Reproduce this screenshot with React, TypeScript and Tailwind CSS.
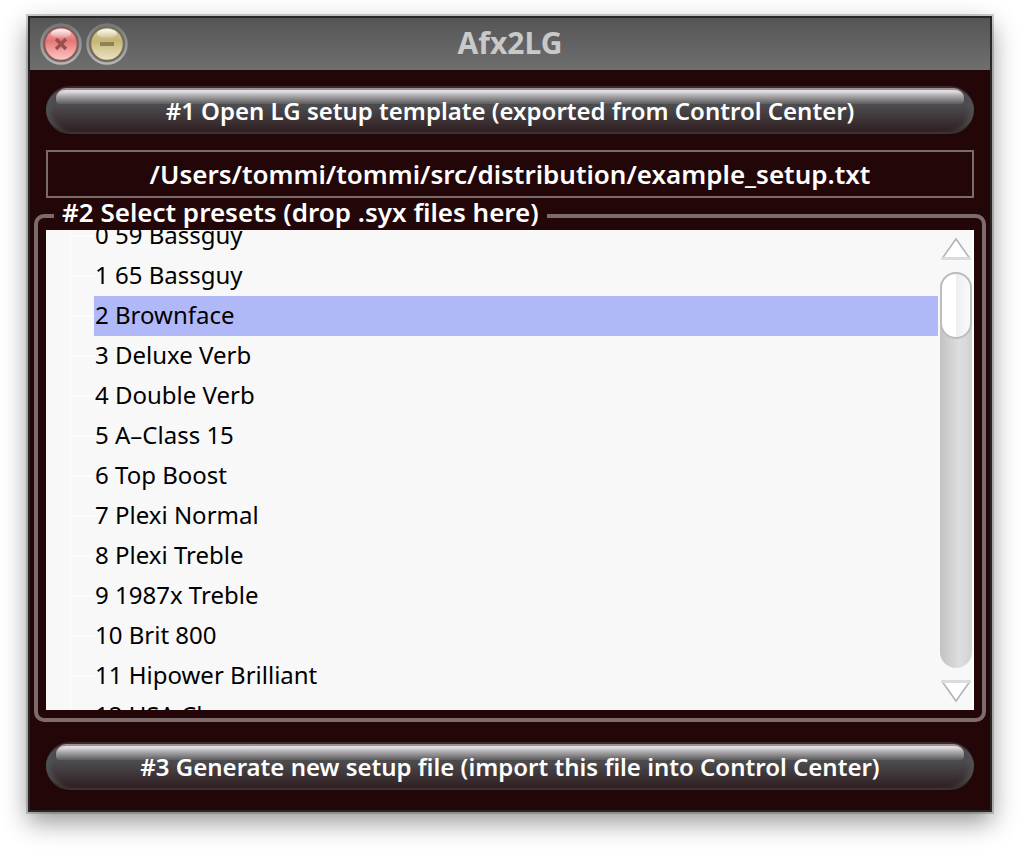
import { useState, type ReactNode } from "react";

const presets = [
  "59 Bassguy",
  "65 Bassguy",
  "Brownface",
  "Deluxe Verb",
  "Double Verb",
  "A–Class 15",
  "Top Boost",
  "Plexi Normal",
  "Plexi Treble",
  "1987x Treble",
  "Brit 800",
  "Hipower Brilliant",
  "USA Clean",
];

function GlossyButton({ children }: { children: ReactNode }) {
  return (
    <button
      type="button"
      className="relative h-12 w-full rounded-full border-y-2 border-t-[#352c2e] border-b-[#373435] bg-linear-to-b from-[#4a4648] via-[#4c4c4f] via-40% to-[#2e1c1f] bg-origin-border pt-0.5 text-center text-2xl leading-10 font-semibold text-white shadow-[inset_9px_0_6px_-5px_#505355,inset_-9px_0_6px_-5px_#505355]"
    >
      <span className="absolute inset-x-[10px] top-0 h-4 rounded-t-[10px] rounded-b-sm border-t-2 border-[#a19092] bg-linear-to-b from-[#e0dcdf] from-10% via-[#b0adb0] via-40% to-[#5c5b5d]" />
      <span className="relative">{children}</span>
    </button>
  );
}

function CloseIcon() {
  return (
    <svg viewBox="0 0 42 42" className="block size-full" aria-hidden="true">
      <defs>
        <linearGradient id="ring" x1="0" y1="0" x2="0" y2="1">
          <stop offset="0" stopColor="#777" />
          <stop offset="1" stopColor="#b5b5b5" />
        </linearGradient>
        <linearGradient id="red" x1="0" y1="0" x2="0" y2="1">
          <stop offset="0" stopColor="#f0b5b4" />
          <stop offset="0.4" stopColor="#e47572" />
          <stop offset="0.65" stopColor="#f09a98" />
          <stop offset="1" stopColor="#f8cbc9" />
        </linearGradient>
        <linearGradient id="shine" x1="0" y1="0" x2="0" y2="1">
          <stop offset="0" stopColor="#fff" stopOpacity="0.85" />
          <stop offset="1" stopColor="#fff" stopOpacity="0.1" />
        </linearGradient>
      </defs>
      <circle cx="21" cy="21" r="19.5" fill="#717171" stroke="url(#ring)" strokeWidth="2.5" />
      <circle cx="21" cy="21" r="16.5" fill="url(#red)" stroke="#8b5654" strokeWidth="1.5" />
      <ellipse cx="21" cy="10.5" rx="10" ry="4.5" fill="url(#shine)" />
      <path d="M16 16l10 10M26 16L16 26" stroke="#985150" strokeWidth="3.5" />
    </svg>
  );
}

function MinimizeIcon() {
  return (
    <svg viewBox="0 0 42 42" className="block size-full" aria-hidden="true">
      <defs>
        <linearGradient id="gold" x1="0" y1="0" x2="0" y2="1">
          <stop offset="0" stopColor="#d8cfad" />
          <stop offset="0.4" stopColor="#c5b475" />
          <stop offset="0.65" stopColor="#d8ca98" />
          <stop offset="1" stopColor="#ebe3c4" />
        </linearGradient>
      </defs>
      <circle cx="21" cy="21" r="19.5" fill="#717171" stroke="url(#ring)" strokeWidth="2.5" />
      <circle cx="21" cy="21" r="16.5" fill="url(#gold)" stroke="#756d4e" strokeWidth="1.5" />
      <ellipse cx="21" cy="10.5" rx="10" ry="4.5" fill="url(#shine)" />
      <path d="M14 21h14" stroke="#8f8356" strokeWidth="4" />
    </svg>
  );
}

function ScrollArrow({ direction }: { direction: "up" | "down" }) {
  return (
    <button
      type="button"
      aria-label={direction === "up" ? "Scroll up" : "Scroll down"}
      className={
        direction === "up"
          ? "flex h-[42px] w-8 items-center justify-center pb-1"
          : "flex h-[42px] w-8 items-center justify-center pt-1"
      }
    >
      <svg
        viewBox="0 0 32 24"
        className={direction === "up" ? "h-6 w-8" : "h-6 w-8 rotate-180"}
        aria-hidden="true"
      >
        <path d="M16 2L2.5 21H29.5Z" fill="#fff" stroke="#b4b4b4" strokeWidth="1.6" />
        <path d="M1.5 21.5H30.5" stroke="#dcdcdc" strokeWidth="3" />
      </svg>
    </button>
  );
}

export default function App() {
  const [selected, setSelected] = useState(2);

  return (
    <div className="min-h-screen bg-white px-7 pt-4 pb-10 font-['Noto_Sans','Open_Sans',sans-serif]">
      <div className="border-2 border-[#272727] bg-[#220608] shadow-[0_0_0_2px_rgba(0,0,0,0.18),0_10px_24px_rgba(0,0,0,0.42)]">
        <header className="grid h-[52px] grid-cols-[1fr_auto_1fr] items-center bg-linear-to-b from-[#555555] to-[#6f6f6f] px-2.5">
          <div className="flex gap-1">
            <button type="button" aria-label="Close" className="size-[42px]">
              <CloseIcon />
            </button>
            <button type="button" aria-label="Minimize" className="size-[42px]">
              <MinimizeIcon />
            </button>
          </div>
          <h1 className="pb-0.5 text-3xl leading-[50px] font-bold text-[#c9c9c9]">Afx2LG</h1>
        </header>

        <main className="pt-4 pb-5">
          <div className="px-4">
            <GlossyButton>#1 Open LG setup template (exported from Control Center)</GlossyButton>
            <input
              type="text"
              readOnly
              aria-label="Setup template file"
              value="/Users/tommi/tommi/src/distribution/example_setup.txt"
              className="mt-4 block h-12 w-full border-2 border-[#7b6a6a] bg-transparent text-center text-[26px] font-semibold text-white outline-none"
            />
          </div>

          <fieldset className="mx-1 mt-0.5 rounded-[10px] border-4 border-[#7d6b6c] px-2 pb-2">
            <legend className="ml-2 h-8 px-2 text-[26px] leading-6 font-semibold text-white">
              #2 Select presets (drop .syx files here)
            </legend>
            <div className="-mt-0.5 flex h-[480px] border-r-2 border-white bg-[#f8f8f8]">
              <div className="min-w-0 flex-1 overflow-hidden">
                <ul
                  role="listbox"
                  aria-label="Presets"
                  className="-mt-3.5 ml-6 border-l-2 border-[#fcfcfc]"
                >
                  {presets.map((name, index) => (
                    <li
                      key={name}
                      role="option"
                      aria-selected={index === selected}
                      onClick={() => setSelected(index)}
                      className="flex h-10 cursor-default items-center"
                    >
                      <span className="h-0.5 w-[22px] bg-[#fcfcfc]" />
                      <span
                        className={
                          index === selected
                            ? "flex-1 bg-[#b0b8f8] pb-0.5 pl-px text-2xl leading-[38px] whitespace-pre text-black"
                            : "flex-1 pb-0.5 pl-px text-2xl leading-[38px] whitespace-pre text-black"
                        }
                      >
                        {index} {name}
                      </span>
                    </li>
                  ))}
                </ul>
              </div>
              <div className="flex w-[34px] flex-col items-end">
                <ScrollArrow direction="up" />
                <div className="w-8 flex-1 rounded-full bg-linear-to-r from-[#c2c2c2] via-[#dedede] via-60% to-[#d2d2d2]">
                  <div className="h-[67px] rounded-full border-2 border-[#bdbdbd] bg-linear-to-r from-white from-50% via-[#eeeeee] via-50% to-[#fafafa]" />
                </div>
                <ScrollArrow direction="down" />
              </div>
            </div>
          </fieldset>

          <div className="mt-5 px-4">
            <GlossyButton>#3 Generate new setup file (import this file into Control Center)</GlossyButton>
          </div>
        </main>
      </div>
    </div>
  );
}
